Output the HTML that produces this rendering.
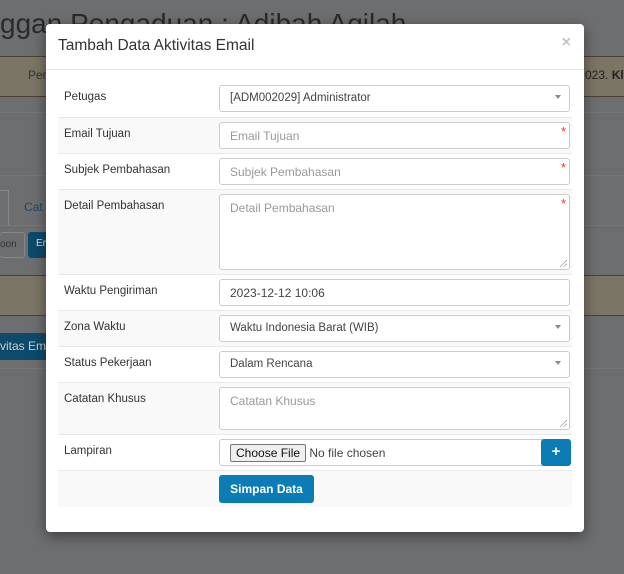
<!DOCTYPE html>
<html><head><meta charset="utf-8"><style>
*{box-sizing:border-box;margin:0;padding:0}
body{width:624px;height:574px;overflow:hidden;background:#6d6e70;font-family:"Liberation Sans",sans-serif;position:relative}
.bg{position:absolute}
.modal{position:absolute;left:46px;top:24px;width:538px;height:508px;background:#fff;border-radius:4px;box-shadow:0 4px 14px rgba(0,0,0,.45)}
.hdr{height:46px;border-bottom:1px solid #e5e5e5;padding:13px 12px;font-size:15.5px;color:#333}
.x{position:absolute;right:13px;top:10px;color:#c4c4c4;font-size:16px;font-weight:bold}
table{position:absolute;left:12px;top:57px;width:514px;border-collapse:collapse}
td{border-top:1px solid #e9e9e9;vertical-align:top;font-size:11.5px;color:#333}
tr:first-child td{border-top:none}
tr:nth-child(even) td{background:#f9f9f9}
td.l{width:161px;padding:10px 6px}
td.r{padding:4px 2px 4px 0}
.in{position:relative;border:1px solid #ccc;border-radius:3px;background:#fff;height:27px;padding:6px 10px;color:#999;font-size:12px}
.in.v{color:#444}
.star{position:absolute;right:3px;top:1px;color:#e33;font-size:13px}
.car{position:absolute;right:8px;top:9px;width:0;height:0;border-left:3px solid transparent;border-right:3px solid transparent;border-top:4px solid #888}
.rz{position:absolute;right:2px;bottom:2px;width:7px;height:7px;background:linear-gradient(135deg,transparent 45%,#888 50%,transparent 55%,transparent 70%,#888 75%,transparent 80%)}
.btn{background:#0d7bb5;color:#fff;border-radius:3px;font-weight:bold;font-size:12px}
</style></head><body>
<div class="bg" style="left:0;top:8px;font-size:28px;color:#2a2a2a;white-space:nowrap">ggan Pengaduan : Adibah Aqilah</div>
<div class="bg" style="left:0;top:56px;width:624px;height:41px;background:#7b7565;border-top:1px solid #4a4030;border-bottom:1px solid #4a4030"></div>
<div class="bg" style="left:585px;top:68px;font-size:12px;color:#222;white-space:nowrap">023. <b>Kli</b></div>
<div class="bg" style="left:28px;top:68px;font-size:12px;color:#333">Per</div>
<div class="bg" style="left:0;top:112px;width:624px;height:1px;background:#777"></div>
<div class="bg" style="left:0;top:175px;width:624px;height:1px;background:#777"></div>
<div class="bg" style="left:0;top:190px;width:9px;height:35px;border:1px solid #888;border-left:none;border-bottom:none"></div>
<div class="bg" style="left:0;top:225px;width:624px;height:1px;background:#777"></div>
<div class="bg" style="left:24px;top:200px;font-size:12px;color:#1d4a66">Cat</div>
<div class="bg" style="left:0;top:232px;width:25px;height:26px;border:1px solid #888;border-left:none;border-radius:3px;font-size:10px;color:#333;padding:6px 0 0 0">oon</div>
<div class="bg" style="left:28px;top:232px;width:20px;height:26px;background:#0d4a6b;border-radius:3px;font-size:10px;color:#ddd;padding:6px 0 0 8px">Er</div>
<div class="bg" style="left:0;top:275px;width:624px;height:41px;background:#7b7565;border-top:1px solid #4a4030;border-bottom:1px solid #4a4030"></div>
<div class="bg" style="left:0;top:333px;width:48px;height:27px;background:#0d4a6b;color:#ccc;font-size:12px;padding:6px 0 0 0;white-space:nowrap;overflow:hidden">vitas Em</div>
<div class="bg" style="left:0;top:368px;width:624px;height:1px;background:#777"></div>

<div class="modal">
<div class="hdr">Tambah Data Aktivitas Email</div><div class="x">×</div>
<table>
<tr style="height:36px"><td class="l">Petugas</td><td class="r"><div class="in v" style="font-size:11.5px">[ADM002029] Administrator<span class="car"></span></div></td></tr>
<tr style="height:36px"><td class="l">Email Tujuan</td><td class="r"><div class="in">Email Tujuan<span class="star">*</span></div></td></tr>
<tr style="height:36px"><td class="l">Subjek Pembahasan</td><td class="r"><div class="in">Subjek Pembahasan<span class="star">*</span></div></td></tr>
<tr style="height:85px"><td class="l">Detail Pembahasan</td><td class="r"><div class="in" style="height:76px">Detail Pembahasan<span class="star">*</span><span class="rz"></span></div></td></tr>
<tr style="height:36px"><td class="l">Waktu Pengiriman</td><td class="r"><div class="in v">2023-12-12 10:06</div></td></tr>
<tr style="height:36px"><td class="l">Zona Waktu</td><td class="r"><div class="in v" style="font-size:11.5px">Waktu Indonesia Barat (WIB)<span class="car"></span></div></td></tr>
<tr style="height:36px"><td class="l">Status Pekerjaan</td><td class="r"><div class="in v" style="font-size:11.5px">Dalam Rencana<span class="car"></span></div></td></tr>
<tr style="height:52px"><td class="l">Catatan Khusus</td><td class="r"><div class="in" style="height:43px">Catatan Khusus<span class="rz"></span></div></td></tr>
<tr style="height:34px"><td class="l">Lampiran</td><td class="r"><div class="in v" style="padding:4px 10px;font-size:12px;border-right:none"><span style="display:inline-block;border:1px solid #777;background:#efefef;border-radius:2px;padding:1px 5px;color:#111">Choose File</span> No file chosen<span class="btn" style="position:absolute;right:-1px;top:-1px;width:30px;height:27px;text-align:center;line-height:26px;font-size:15px">+</span></div></td></tr>
<tr style="height:36px"><td class="l"></td><td class="r"><div class="btn" style="display:inline-block;width:95px;height:28px;line-height:28px;text-align:center;margin-top:0">Simpan Data</div></td></tr>
</table>
</div>
</body></html>
